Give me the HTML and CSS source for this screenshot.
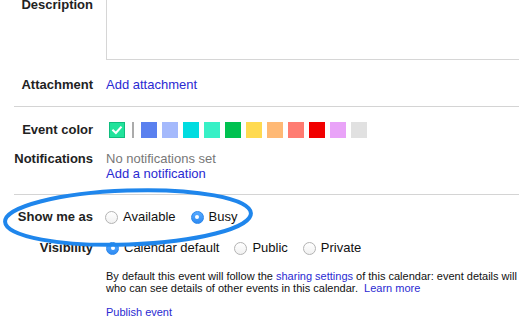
FILE: index.html
```html
<!DOCTYPE html>
<html>
<head>
<meta charset="utf-8">
<link rel="stylesheet" href="styles.css">
</head>
<body>
<div class="form">
  <div class="row desc-row">
    <div class="label">Description</div>
    <div class="textbox"></div>
  </div>
  <div class="row attach-row">
    <div class="label">Attachment</div>
    <div class="value"><a class="link">Add attachment</a></div>
  </div>
  <div class="sep"></div>
  <div class="row color-row">
    <div class="label">Event color</div>
    <div class="swatches">
      <span class="swatch selected">
        <svg width="14" height="14" viewBox="0 0 14 14"><path d="M3.2 7.4 L5.9 9.9 L10.8 4.4" fill="none" stroke="#fff" stroke-width="2.1" stroke-linecap="square"/></svg>
      </span>
      <span class="vbar"></span>
      <span class="swatch c1"></span>
      <span class="swatch c2"></span>
      <span class="swatch c3"></span>
      <span class="swatch c4"></span>
      <span class="swatch c5"></span>
      <span class="swatch c6"></span>
      <span class="swatch c7"></span>
      <span class="swatch c8"></span>
      <span class="swatch c9"></span>
      <span class="swatch c10"></span>
      <span class="swatch c11"></span>
    </div>
  </div>
  <div class="row notif-row">
    <div class="label">Notifications</div>
    <div class="value">
      <div class="muted">No notifications set</div>
      <div><a class="link">Add a notification</a></div>
    </div>
  </div>
  <div class="sep sep2"></div>
  <div class="row show-row">
    <div class="label">Show me as</div>
    <div class="radios">
      <label class="opt"><span class="radio"></span>Available</label>
      <label class="opt"><span class="radio on"></span>Busy</label>
    </div>
  </div>
  <div class="row vis-row">
    <div class="label">Visibility</div>
    <div class="radios">
      <label class="opt"><span class="radio on"></span>Calendar default</label>
      <label class="opt"><span class="radio"></span>Public</label>
      <label class="opt"><span class="radio"></span>Private</label>
    </div>
  </div>
  <div class="row info-row">
    <div></div>
    <div class="info">By default this event will follow the <a class="link">sharing settings</a> of this calendar: event details will be visible to anyone<br>who can see details of other events in this calendar.&nbsp; <a class="link">Learn more</a></div>
  </div>
  <div class="row publish-row">
    <div></div>
    <div class="info"><a class="link">Publish event</a></div>
  </div>
</div>
<svg class="ring" width="519" height="316" viewBox="0 0 519 316">
  <ellipse cx="128" cy="217.5" rx="123" ry="27" transform="rotate(-2 128 217.5)" fill="none" stroke="#1f86ec" stroke-width="4"/>
</svg>
</body>
</html>
```
FILE: styles.css
```css
html, body {
  margin: 0;
  padding: 0;
}
body {
  width: 519px;
  height: 316px;
  overflow: hidden;
  position: relative;
  background: #fff;
  font-family: "Liberation Sans", Arial, sans-serif;
  font-size: 13px;
  color: #222;
}
.form {
  margin-top: -3px;
  padding-left: 14px;
}
.row {
  display: grid;
  grid-template-columns: 79px 1fr;
  column-gap: 13px;
}
.label {
  text-align: right;
  font-weight: bold;
  line-height: 16px;
  white-space: nowrap;
  color: #222;
}
.link {
  color: #2a2ad2;
  text-decoration: none;
  cursor: pointer;
}
.value {
  line-height: 16px;
  white-space: nowrap;
}
.textbox {
  height: 63px;
  box-sizing: border-box;
  border-left: 1px solid #d6d6d6;
  border-bottom: 1px solid #d6d6d6;
  margin-right: -20px;
}
.attach-row {
  margin-top: 17px;
}
.sep {
  border-top: 1px solid #d4d4d4;
  margin-top: 13px;
  margin-right: -20px;
}
.color-row {
  margin-top: 15px;
  align-items: center;
}
.swatches {
  display: flex;
  align-items: center;
  gap: 5px;
  margin-left: 3px;
  height: 16px;
}
.swatch {
  width: 16px;
  height: 16px;
  box-sizing: border-box;
  flex: none;
}
.swatch.selected {
  background: #22e39b;
  border: 1px solid #10bd7f;
  display: flex;
  align-items: center;
  justify-content: center;
  margin-right: 2px;
}
.vbar {
  width: 2px;
  height: 16px;
  background: #ababab;
  margin-right: 2px;
}
.c1 { background: #5a80ef; }
.c2 { background: #a4b9fc; }
.c3 { background: #00dce0; }
.c4 { background: #37f0c6; }
.c5 { background: #00c150; }
.c6 { background: #ffda50; }
.c7 { background: #ffb975; }
.c8 { background: #ff7c72; }
.c9 { background: #f10000; }
.c10 { background: #e9a3f8; }
.c11 { background: #e1e1e1; }
.notif-row {
  margin-top: 13px;
}
.notif-row .label,
.notif-row .value {
  line-height: 15px;
}
.muted {
  color: #777;
}
.sep2 {
  margin-top: 13px;
}
.show-row {
  margin-top: 14px;
}
.vis-row {
  margin-top: 15px;
}
.radios {
  display: flex;
  align-items: center;
  gap: 15px;
  height: 16px;
  white-space: nowrap;
}
.opt {
  display: flex;
  align-items: center;
  gap: 5px;
  line-height: 16px;
  color: #111;
}
.radio {
  width: 13px;
  height: 13px;
  box-sizing: border-box;
  border-radius: 50%;
  border: 1px solid #b3b3b3;
  background: linear-gradient(#ffffff, #f1f1f1);
  position: relative;
  flex: none;
}
.radio.on {
  border-color: #2a86ea;
  background: linear-gradient(#58aaff, #2d8bf3);
}
.radio.on::after {
  content: "";
  position: absolute;
  left: 3.5px;
  top: 3.5px;
  width: 4px;
  height: 4px;
  border-radius: 50%;
  background: #fff;
}
.show-row .radios {
  margin-left: -1px;
}
.info-row {
  margin-top: 14px;
}
.info {
  font-size: 11px;
  line-height: 12px;
  white-space: nowrap;
  color: #111;
}
.publish-row {
  margin-top: 12px;
}
.ring {
  position: absolute;
  left: 0;
  top: 0;
  pointer-events: none;
}
```
